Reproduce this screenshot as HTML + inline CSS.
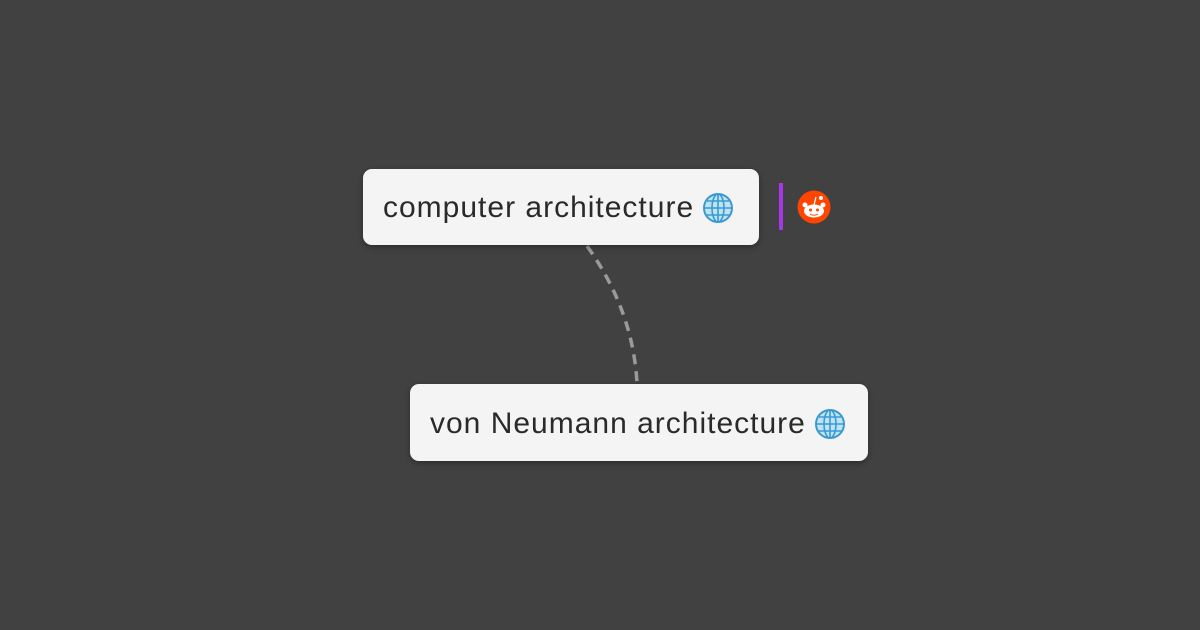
<!DOCTYPE html>
<html><head><style>
body{margin:0;width:1200px;height:630px;background:#414141;position:relative;overflow:hidden;font-family:"Liberation Sans",sans-serif}
.box{position:absolute;background:#f4f4f4;border-radius:9px;box-shadow:0 2px 6px rgba(0,0,0,.35);color:#2a2a2a;font-size:30px;letter-spacing:1px;box-sizing:border-box;padding-left:20px;padding-top:2px;display:flex;align-items:center;white-space:nowrap}
.box svg{margin-left:8px}
</style></head><body>
<svg width="1200" height="630" style="position:absolute;left:0;top:0">
<path d="M587 246 Q633 310 637 383" fill="none" stroke="#9a9a9a" stroke-width="3.5" stroke-dasharray="10 7"/>
<rect x="779" y="183" width="4" height="47" fill="#a637e8"/>
<circle cx="814" cy="207" r="16.5" fill="#ff4500"/>
<ellipse cx="814" cy="211" rx="10" ry="6.5" fill="#fff"/>
<circle cx="805" cy="205" r="2.5" fill="#fff"/><circle cx="823" cy="205" r="2.5" fill="#fff"/>
<line x1="814" y1="205" x2="816" y2="197" stroke="#fff" stroke-width="1.3"/>
<circle cx="821" cy="198" r="2" fill="#fff"/>
<circle cx="810.5" cy="210" r="1.5" fill="#ff4500"/><circle cx="817.5" cy="210" r="1.5" fill="#ff4500"/>
<path d="M810 214 Q814 216.5 818 214" stroke="#ff4500" stroke-width="1" fill="none"/>
</svg>
<div class="box" style="left:363px;top:169px;width:396px;height:76px">computer architecture<svg width="32" height="32" viewBox="0 0 32 32"><circle cx="16" cy="16" r="14" fill="#bfe3f5" stroke="#3a9ad0" stroke-width="2"/><ellipse cx="16" cy="16" rx="6" ry="14" fill="none" stroke="#3a9ad0" stroke-width="1.6"/><line x1="16" y1="2" x2="16" y2="30" stroke="#3a9ad0" stroke-width="1.6"/><line x1="2" y1="16" x2="30" y2="16" stroke="#3a9ad0" stroke-width="1.6"/><line x1="5" y1="9" x2="27" y2="9" stroke="#3a9ad0" stroke-width="1.4"/><line x1="5" y1="23" x2="27" y2="23" stroke="#3a9ad0" stroke-width="1.4"/></svg></div>
<div class="box" style="left:410px;top:384px;width:458px;height:77px">von Neumann architecture<svg width="32" height="32" viewBox="0 0 32 32"><circle cx="16" cy="16" r="14" fill="#bfe3f5" stroke="#3a9ad0" stroke-width="2"/><ellipse cx="16" cy="16" rx="6" ry="14" fill="none" stroke="#3a9ad0" stroke-width="1.6"/><line x1="16" y1="2" x2="16" y2="30" stroke="#3a9ad0" stroke-width="1.6"/><line x1="2" y1="16" x2="30" y2="16" stroke="#3a9ad0" stroke-width="1.6"/><line x1="5" y1="9" x2="27" y2="9" stroke="#3a9ad0" stroke-width="1.4"/><line x1="5" y1="23" x2="27" y2="23" stroke="#3a9ad0" stroke-width="1.4"/></svg></div>
</body></html>
